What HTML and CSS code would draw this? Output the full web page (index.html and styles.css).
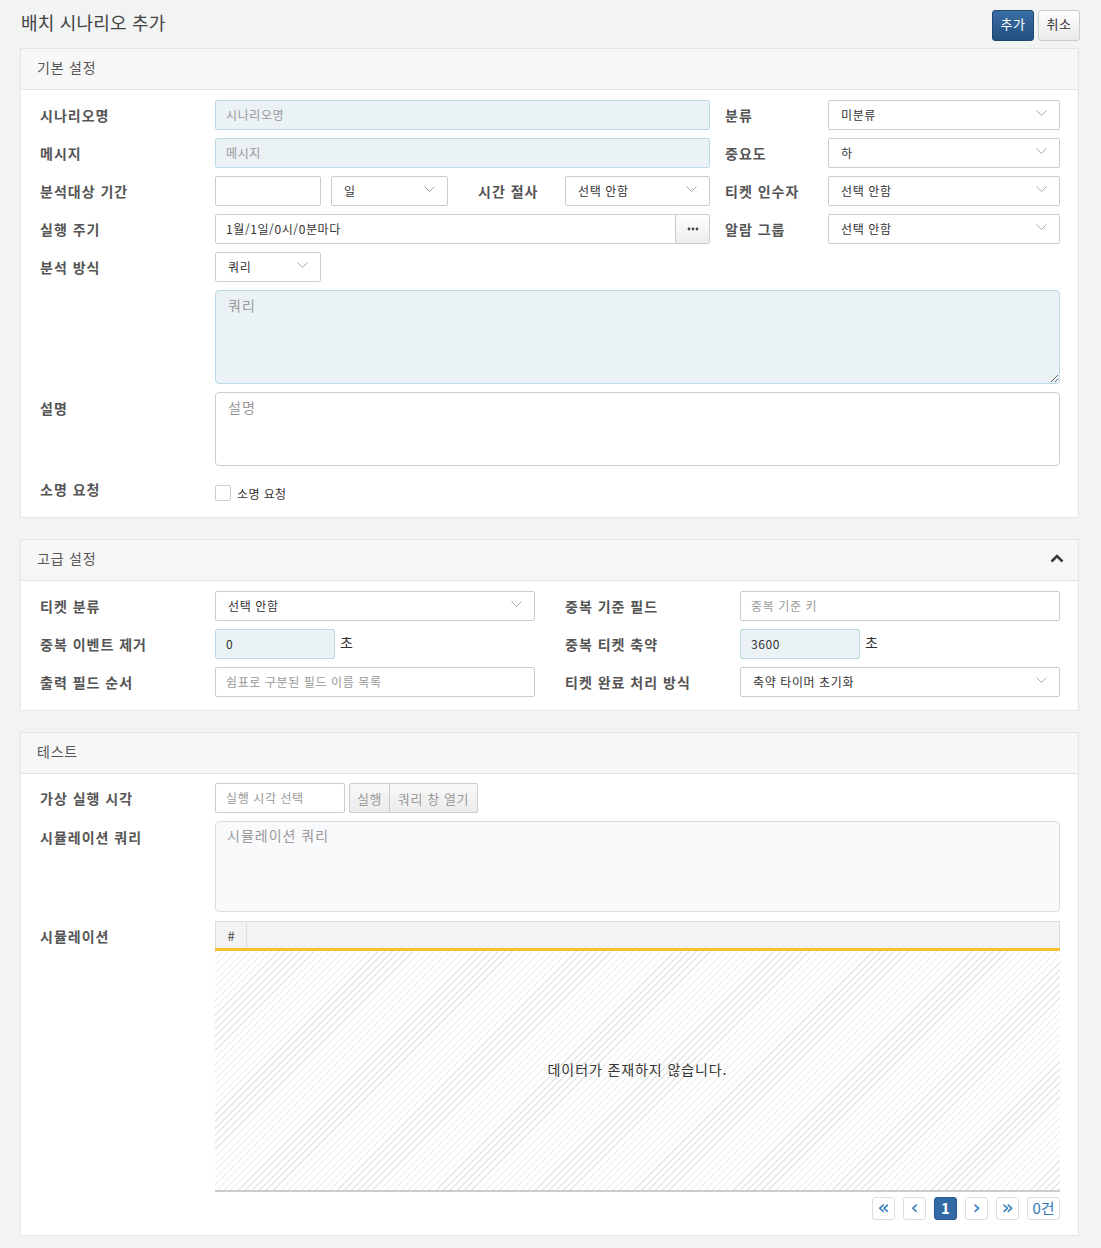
FILE: index.html
```html
<!DOCTYPE html>
<html lang="ko">
<head>
<meta charset="utf-8">
<title>배치 시나리오 추가</title>
<link rel="stylesheet" href="styles.css">
</head>
<body>
<div class="topbar">
  <h1 class="title">배치 시나리오 추가</h1>
  <div class="actions">
    <button class="btn btn-primary">추가</button>
    <button class="btn btn-default">취소</button>
  </div>
</div>

<div class="panels">
  <section class="panel">
    <div class="panel-heading"><span class="heading-text">기본 설정</span></div>
    <div class="panel-body grid-basic">
      <div class="label">시나리오명</div>
      <input class="input input-ro" placeholder="시나리오명" readonly>
      <div class="label label-r">분류</div>
      <div class="select"><span>미분류</span><svg class="chev" width="11" height="7" viewBox="0 0 11 7"><polyline points="0.5,0.5 5.5,5.5 10.5,0.5" fill="none" stroke="#a8a8a8" stroke-width="1"/></svg></div>

      <div class="label">메시지</div>
      <input class="input input-ro" placeholder="메시지" readonly>
      <div class="label label-r">중요도</div>
      <div class="select"><span>하</span><svg class="chev" width="11" height="7" viewBox="0 0 11 7"><polyline points="0.5,0.5 5.5,5.5 10.5,0.5" fill="none" stroke="#a8a8a8" stroke-width="1"/></svg></div>

      <div class="label">분석대상 기간</div>
      <div class="field-row">
        <input class="input w-period">
        <div class="select w-unit"><span>일</span><svg class="chev" width="11" height="7" viewBox="0 0 11 7"><polyline points="0.5,0.5 5.5,5.5 10.5,0.5" fill="none" stroke="#a8a8a8" stroke-width="1"/></svg></div>
        <div class="label inline-label">시간 절사</div>
        <div class="select grow"><span>선택 안함</span><svg class="chev" width="11" height="7" viewBox="0 0 11 7"><polyline points="0.5,0.5 5.5,5.5 10.5,0.5" fill="none" stroke="#a8a8a8" stroke-width="1"/></svg></div>
      </div>
      <div class="label label-r">티켓 인수자</div>
      <div class="select"><span>선택 안함</span><svg class="chev" width="11" height="7" viewBox="0 0 11 7"><polyline points="0.5,0.5 5.5,5.5 10.5,0.5" fill="none" stroke="#a8a8a8" stroke-width="1"/></svg></div>

      <div class="label">실행 주기</div>
      <div class="input-group">
        <input class="input grow" value="1월/1일/0시/0분마다">
        <button class="addon-btn"><svg width="12" height="4" viewBox="0 0 12 4"><circle cx="2" cy="2" r="1.4" fill="#444"/><circle cx="6" cy="2" r="1.4" fill="#444"/><circle cx="10" cy="2" r="1.4" fill="#444"/></svg></button>
      </div>
      <div class="label label-r">알람 그룹</div>
      <div class="select"><span>선택 안함</span><svg class="chev" width="11" height="7" viewBox="0 0 11 7"><polyline points="0.5,0.5 5.5,5.5 10.5,0.5" fill="none" stroke="#a8a8a8" stroke-width="1"/></svg></div>

      <div class="label">분석 방식</div>
      <div class="field-row">
        <div class="select w-period"><span>쿼리</span><svg class="chev" width="11" height="7" viewBox="0 0 11 7"><polyline points="0.5,0.5 5.5,5.5 10.5,0.5" fill="none" stroke="#a8a8a8" stroke-width="1"/></svg></div>
      </div>
      <div></div>
      <div></div>

      <div></div>
      <textarea class="textarea textarea-ro span3 h-query" placeholder="쿼리"></textarea>

      <div class="label label-top">설명</div>
      <textarea class="textarea span3 h-desc noresize" placeholder="설명"></textarea>

      <div class="label">소명 요청</div>
      <label class="check"><span class="box"></span><span class="check-text">소명 요청</span></label>
      <div></div>
      <div></div>
    </div>
  </section>

  <section class="panel">
    <div class="panel-heading">
      <span class="heading-text">고급 설정</span>
      <svg class="caret" width="14" height="9" viewBox="0 0 14 9"><polyline points="1.5,7.5 7,2 12.5,7.5" fill="none" stroke="#3a3a3a" stroke-width="2.6"/></svg>
    </div>
    <div class="panel-body grid-adv">
      <div class="label">티켓 분류</div>
      <div class="select"><span>선택 안함</span><svg class="chev" width="11" height="7" viewBox="0 0 11 7"><polyline points="0.5,0.5 5.5,5.5 10.5,0.5" fill="none" stroke="#a8a8a8" stroke-width="1"/></svg></div>
      <div class="label label-r2">중복 기준 필드</div>
      <input class="input" placeholder="중복 기준 키">

      <div class="label">중복 이벤트 제거</div>
      <div class="field-row">
        <input class="input input-ro w-sec" value="0">
        <span class="unit">초</span>
      </div>
      <div class="label label-r2">중복 티켓 축약</div>
      <div class="field-row">
        <input class="input input-ro w-sec" value="3600">
        <span class="unit">초</span>
      </div>

      <div class="label">출력 필드 순서</div>
      <input class="input" placeholder="쉼표로 구분된 필드 이름 목록">
      <div class="label label-r2">티켓 완료 처리 방식</div>
      <div class="select"><span>축약 타이머 초기화</span><svg class="chev" width="11" height="7" viewBox="0 0 11 7"><polyline points="0.5,0.5 5.5,5.5 10.5,0.5" fill="none" stroke="#a8a8a8" stroke-width="1"/></svg></div>
    </div>
  </section>

  <section class="panel">
    <div class="panel-heading"><span class="heading-text">테스트</span></div>
    <div class="panel-body grid-test">
      <div class="label">가상 실행 시각</div>
      <div class="field-row">
        <input class="input w-time" placeholder="실행 시각 선택">
        <div class="btn-group">
          <button class="gbtn gbtn-run">실행</button>
          <button class="gbtn gbtn-open">쿼리 창 열기</button>
        </div>
      </div>

      <div class="label label-top">시뮬레이션 쿼리</div>
      <textarea class="textarea textarea-sim h-sim noresize" placeholder="시뮬레이션 쿼리"></textarea>

      <div class="label label-sim">시뮬레이션</div>
      <div class="sim">
        <div class="table">
          <div class="thead">
            <div class="th-num">#</div>
            <div class="th-rest"></div>
          </div>
          <div class="tbody">데이터가 존재하지 않습니다.</div>
        </div>
        <div class="pager">
          <span class="pg arrow">&laquo;</span>
          <span class="pg arrow">&lsaquo;</span>
          <span class="pg active">1</span>
          <span class="pg arrow">&rsaquo;</span>
          <span class="pg arrow">&raquo;</span>
          <span class="pg count">0건</span>
        </div>
      </div>
    </div>
  </section>
</div>
</body>
</html>
```

FILE: styles.css
```css
* { box-sizing: border-box; }
html, body { margin: 0; padding: 0; }
body {
  width: 1101px;
  height: 1248px;
  overflow: hidden;
  background: #f2f3f3;
  font-family: "Noto Sans CJK KR", "Noto Sans", sans-serif;
  color: #333;
}

.topbar {
  display: flex;
  justify-content: space-between;
  align-items: flex-start;
  height: 48px;
  padding: 10px 21px 0 21px;
}
.title {
  margin: 0;
  font-size: 18px;
  font-weight: 400;
  line-height: 24px;
  color: #444;
  letter-spacing: 0.2px;
}
.actions { display: flex; gap: 4px; }
.btn {
  width: 42px;
  height: 31px;
  padding: 0 0 4px 0;
  font-family: inherit;
  font-size: 13px;
  line-height: 20px;
  border-radius: 3px;
  border: 1px solid #ccc;
  letter-spacing: 0.5px;
}
.btn-primary {
  background: linear-gradient(#3a6ea5, #22507f);
  border-color: #1d4670;
  color: #fff;
}
.btn-default {
  background: linear-gradient(#ffffff, #e9e9e9);
  color: #333;
}

.panels {
  display: flex;
  flex-direction: column;
  gap: 21px;
  margin: 0 22px 0 20px;
}
.panel {
  background: #fff;
  border: 1px solid #e4e6e6;
}
.panel-heading {
  height: 41px;
  background: #f7f7f7;
  border-bottom: 1px solid #e3e3e3;
  padding: 0 14px 0 16px;
  display: flex;
  align-items: center;
  justify-content: space-between;
  font-size: 14px;
  color: #555;
}
.heading-text { letter-spacing: 0.8px; margin-top: -4px; }
.caret { margin-top: -3px; }
.panel-body {
  padding: 10px 18px 13px 19px;
}

.grid-basic {
  display: grid;
  grid-template-columns: 175px 495px 118px 232px;
  row-gap: 8px;
}
.grid-adv {
  display: grid;
  grid-template-columns: 175px 320px 205px 320px;
  row-gap: 8px;
}
.grid-test {
  display: grid;
  grid-template-columns: 175px 845px;
  row-gap: 8px;
  padding-top: 9px;
  padding-bottom: 15px;
}

.label {
  font-size: 14px;
  font-weight: 700;
  color: #555;
  line-height: 30px;
  height: 30px;
  white-space: nowrap;
  letter-spacing: 1px;
}
.label-r { padding-left: 15px; }
.label-r2 { padding-left: 30px; }
.label-top { margin-top: 1px; }
.label-sim { margin-top: 1px; }

.input {
  height: 30px;
  border: 1px solid #ccc;
  border-radius: 2px;
  padding: 0 10px 1px 10px;
  font-family: inherit;
  font-size: 12px;
  letter-spacing: 0.6px;
  color: #333;
  background: #fff;
  outline: none;
  min-width: 0;
}
.input::placeholder { color: #999; }
.input-ro {
  background: #eaf2f5;
  border-color: #bcd9e6;
}

.select {
  height: 30px;
  border: 1px solid #ccc;
  border-radius: 2px;
  padding: 0 12px 0 12px;
  display: flex;
  align-items: center;
  justify-content: space-between;
  font-size: 12px;
  letter-spacing: 0.6px;
  color: #333;
  background: #fff;
}
.select span { margin-top: -1px; }
.chev { flex: none; margin-top: -3px; }

.field-row {
  display: flex;
  align-items: center;
}
.w-period { width: 106px; }
.w-unit { width: 117px; margin-left: 10px; }
.inline-label { width: 117px; padding-left: 30px; }
.grow { flex: 1; }
.w-sec { width: 120px; }
.unit { font-size: 14px; margin-left: 5px; margin-top: -5px; color: #333; }
.w-time { width: 130px; }

.input-group { display: flex; }
.input-group .input { border-radius: 2px 0 0 2px; }
.addon-btn {
  width: 34px;
  height: 30px;
  border: 1px solid #ccc;
  border-left: none;
  border-radius: 0 2px 2px 0;
  background: linear-gradient(#ffffff, #ececec);
  display: flex;
  align-items: center;
  justify-content: center;
  padding: 0;
}

.textarea {
  display: block;
  border: 1px solid #ccc;
  border-radius: 4px;
  padding: 4px 12px;
  font-family: inherit;
  font-size: 14px;
  line-height: 20px;
  letter-spacing: 1px;
  color: #333;
  background: #fff;
  outline: none;
  width: 100%;
}
.textarea::placeholder { color: #999; }
.textarea-ro { background: #eaf2f5; border-color: #bcd9e6; }
.textarea-sim { background: #f9fafc; border-color: #ddd; padding-left: 11px; padding-top: 3px; }
.noresize { resize: none; }
.span3 { grid-column: 2 / 5; }
.h-query { height: 94px; }
.h-desc { height: 74px; }
.h-sim { height: 91px; }

.check {
  display: flex;
  align-items: center;
  height: 30px;
  padding-top: 8px;
}
.box {
  width: 16px;
  height: 16px;
  border: 1px solid #ccc;
  border-radius: 2px;
  background: #fff;
}
.check-text { font-size: 12px; color: #333; margin-left: 6px; letter-spacing: 0.4px; }

.btn-group { display: flex; margin-left: 4px; }
.gbtn {
  height: 30px;
  border: 1px solid #ccc;
  background: linear-gradient(#f8f8f8, #ececec);
  color: #999;
  font-family: inherit;
  font-size: 13px;
  letter-spacing: 0.6px;
  padding: 0;
}
.gbtn-run { width: 41px; border-radius: 2px 0 0 2px; }
.gbtn-open { width: 88px; border-left: none; border-radius: 0 2px 2px 0; }

.sim { display: flex; flex-direction: column; }
.table { border-bottom: 2px solid #ccc; margin-top: 1px; }
.thead {
  display: flex;
  height: 27px;
  background: #f3f3f3;
  border: 1px solid #ddd;
  border-bottom: none;
}
.th-num {
  width: 31px;
  border-right: 1px solid #ddd;
  font-size: 13px;
  color: #444;
  display: flex;
  align-items: center;
  justify-content: center;
}
.th-rest { flex: 1; }
.tbody {
  border-top: 3px solid #fbc02d;
  height: 242px;
  display: flex;
  align-items: center;
  justify-content: center;
  font-size: 14px;
  letter-spacing: 0.9px;
  color: #333;
  padding-bottom: 3px;
  background: repeating-linear-gradient(135deg, #e6e6e6 0 1px, #ffffff 1px 5px);
}

.pager {
  display: flex;
  justify-content: flex-end;
  gap: 8px;
  margin-top: 5px;
}
.pg {
  width: 23px;
  height: 23px;
  border: 1px solid #ddd;
  border-radius: 3px;
  display: flex;
  align-items: center;
  justify-content: center;
  font-size: 15px;
  line-height: 1;
  padding-bottom: 2px;
  color: #337ab7;
  background: #fff;
}
.pg.arrow { font-size: 20px; padding-bottom: 4px; font-family: "DejaVu Sans", sans-serif; }
.pg.active {
  background: #336aa5;
  border-color: #2a5a8f;
  color: #fff;
  font-weight: 700;
}
.pg.count { width: 33px; font-size: 15px; }
```
